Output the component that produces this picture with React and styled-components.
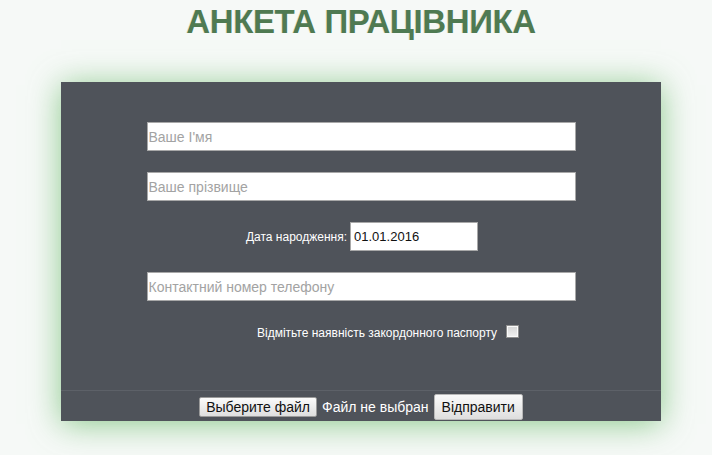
import React from "react";
import styled, { createGlobalStyle } from "styled-components";

const Global = createGlobalStyle`
  html, body { margin: 0; padding: 0; background: #f6f9f7; }
  body { font-family: "Liberation Sans", Arial, sans-serif; }
`;

const Page = styled.div`
  display: flex;
  flex-direction: column;
  align-items: center;
  padding-left: 10px;
  min-height: 455px;
`;

const Title = styled.h1`
  margin: 3px 0 0;
  font-size: 33px;
  line-height: 38px;
  font-weight: 700;
  color: #4f7a52;
  text-shadow: -1px 0 0 rgba(170, 160, 90, 0.2);
  letter-spacing: -0.4px;
`;

const Panel = styled.form`
  margin-top: 41px;
  width: 600px;
  background: #4f535a;
  box-shadow: 0 3px 30px rgba(105, 185, 105, 0.75);
  display: flex;
  flex-direction: column;
`;

const Fields = styled.div`
  display: flex;
  flex-direction: column;
  align-items: center;
  gap: 21px;
  padding: 40px 0 0;
  height: 309px;
  box-sizing: border-box;
  border-bottom: 1px solid #5d6168;
`;

const TextInput = styled.input`
  box-sizing: border-box;
  width: ${(p) => p.$w || 429}px;
  height: 29px;
  margin: 0;
  border: 1px solid #a8a8a8;
  padding: 0 ${(p) => p.$pad || 1}px;
  background: #fff;
  font-family: "Liberation Sans", Arial, sans-serif;
  font-size: ${(p) => p.$size || 14}px;
  color: #111;
  outline: none;
  &::placeholder { color: #a3a3a3; }
`;

const DateRow = styled.div`
  display: flex;
  align-items: center;
  gap: 3px;
  padding-left: 2px;
`;

const Label = styled.label`
  color: #fff;
  font-size: 12px;
`;

const CheckRow = styled.div`
  display: flex;
  align-items: center;
  gap: 9px;
  padding-left: 54px;
  margin-top: 4px;
`;

const Check = styled.input`
  appearance: none;
  margin: 0;
  width: 13px;
  height: 13px;
  box-sizing: border-box;
  border: 1px solid #8e8e8e;
  background: linear-gradient(#d6d6d6, #f2f2f2);
  box-shadow: inset 0 0 0 1px #fafafa;
  position: relative;
  top: -2px;
`;

const Footer = styled.div`
  display: flex;
  align-items: center;
  justify-content: center;
  gap: 5px;
  height: 30px;
  padding-top: 2px;
  box-sizing: border-box;
`;

const Btn = styled.button`
  box-sizing: border-box;
  height: ${(p) => p.$h}px;
  padding: 0 ${(p) => p.$pad}px;
  margin: 0;
  border: 1px solid ${(p) => (p.$h > 22 ? "#b9b9b9" : "#9a9a9a")};
  border-radius: 2px;
  background: linear-gradient(#fbfbfb, #dedede);
  font-family: "Liberation Sans", Arial, sans-serif;
  font-size: 14px;
  color: #111;
`;

const FileNote = styled.span`
  color: #fff;
  font-size: 14px;
`;

export default function App() {
  return (
    <>
      <Global />
      <Page>
        <Title>АНКЕТА ПРАЦІВНИКА</Title>
        <Panel onSubmit={(e) => e.preventDefault()}>
          <Fields>
            <TextInput placeholder="Ваше І'мя" />
            <TextInput placeholder="Ваше прізвище" />
            <DateRow>
              <Label>Дата народження:</Label>
              <TextInput $w={128} $pad={3} $size={13} defaultValue="01.01.2016" />
            </DateRow>
            <TextInput placeholder="Контактний номер телефону" />
            <CheckRow>
              <Label>Відмітьте наявність закордонного паспорту</Label>
              <Check type="checkbox" />
            </CheckRow>
          </Fields>
          <Footer>
            <Btn type="button" $h={20} $pad={6}>Выберите файл</Btn>
            <FileNote>Файл не выбран</FileNote>
            <Btn type="submit" $h={26} $pad={7}>Відправити</Btn>
          </Footer>
        </Panel>
      </Page>
    </>
  );
}
